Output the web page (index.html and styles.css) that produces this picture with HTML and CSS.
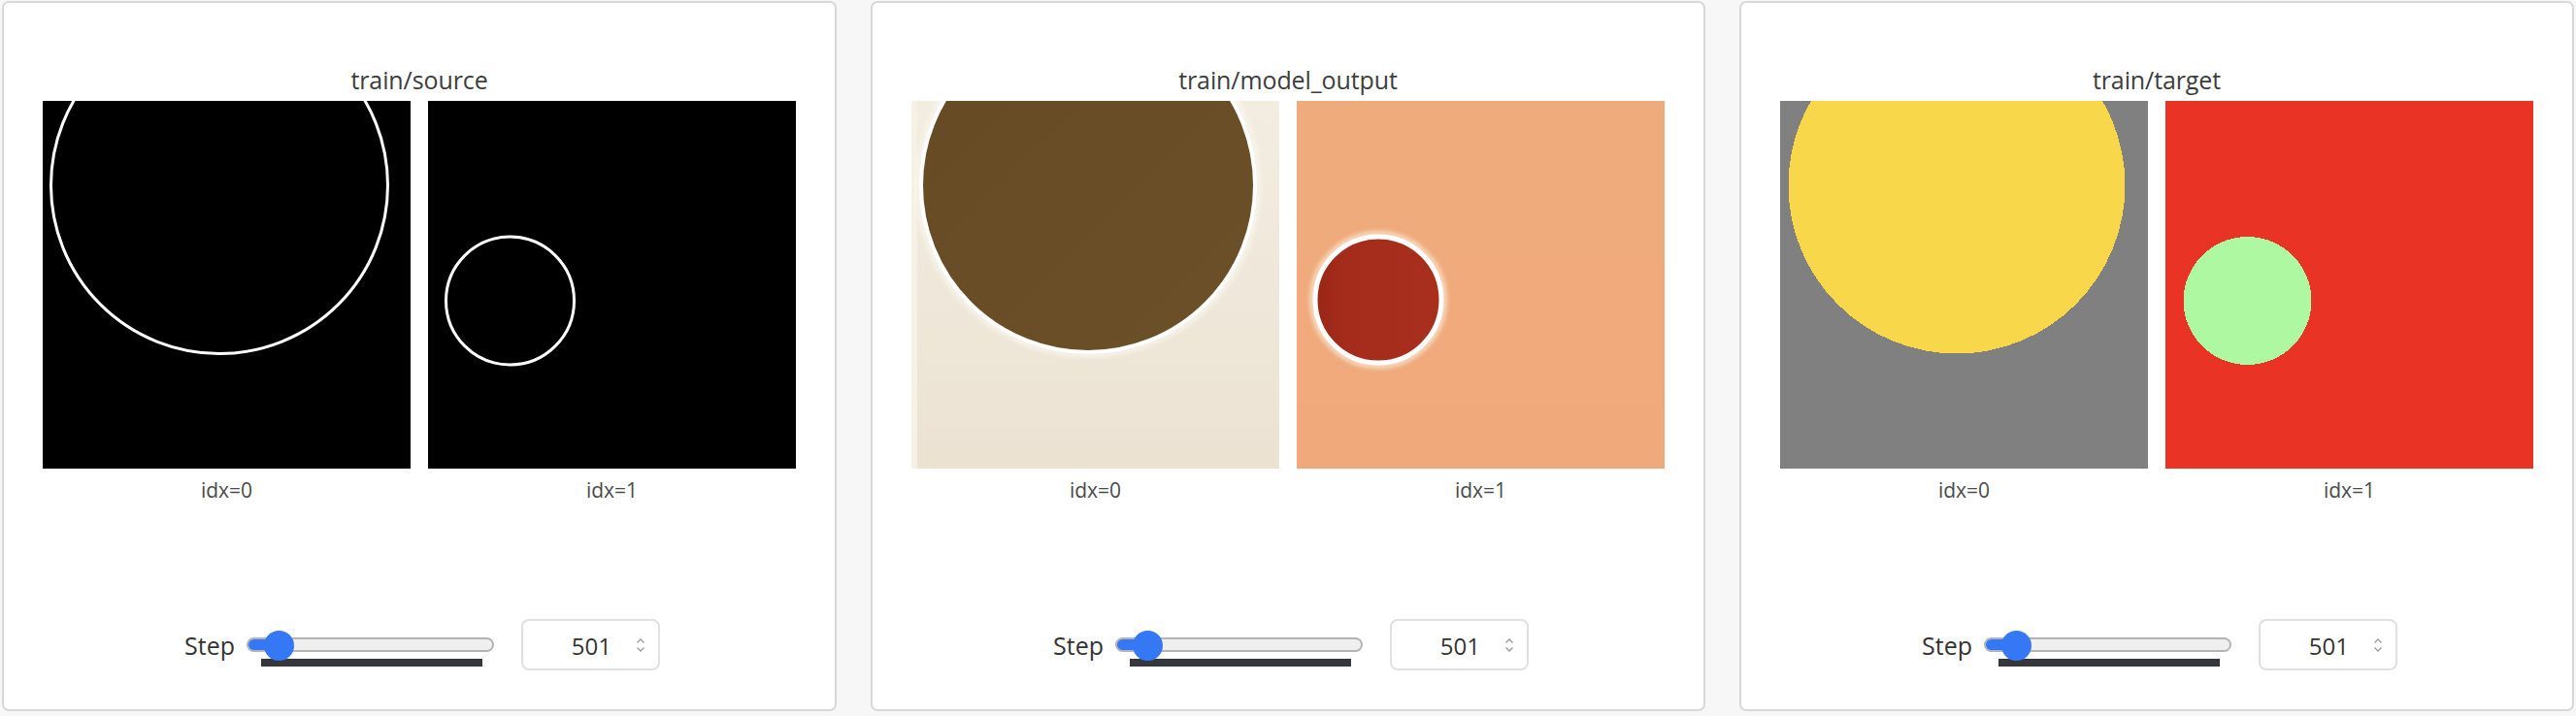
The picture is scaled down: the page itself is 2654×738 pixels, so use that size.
FILE: index.html
```html
<!DOCTYPE html>
<html lang="en">
<head>
<meta charset="utf-8">
<title>Media panels</title>
<link rel="stylesheet" href="styles.css">
</head>
<body>
<div class="panels">

  <section class="card">
    <h2 class="title">train/source</h2>
    <div class="media-row">
      <figure class="media">
        <svg class="canvas" viewBox="0 0 379 379" width="379" height="379">
          <rect width="379" height="379" fill="#000"/>
          <circle cx="182" cy="87" r="173.5" fill="none" stroke="#fff" stroke-width="3"/>
        </svg>
        <figcaption class="caption">idx=0</figcaption>
      </figure>
      <figure class="media">
        <svg class="canvas" viewBox="0 0 379 379" width="379" height="379">
          <rect width="379" height="379" fill="#000"/>
          <circle cx="84.5" cy="206" r="66" fill="none" stroke="#fff" stroke-width="3"/>
        </svg>
        <figcaption class="caption">idx=1</figcaption>
      </figure>
    </div>
    <div class="controls">
      <span class="step-label">Step</span>
      <div class="slider">
        <div class="track"><div class="fill"></div></div>
        <div class="thumb"></div>
        <div class="ticks"></div>
      </div>
      <div class="num-input">
        <span class="num-value">501</span>
        <svg class="spinner" viewBox="0 0 10 16" width="10" height="16">
          <path d="M1.5 5.5 L5 2 L8.5 5.5" fill="none" stroke="#9a9a9a" stroke-width="1.3"/>
          <path d="M1.5 10.5 L5 14 L8.5 10.5" fill="none" stroke="#9a9a9a" stroke-width="1.3"/>
        </svg>
      </div>
    </div>
  </section>

  <section class="card">
    <h2 class="title">train/model_output</h2>
    <div class="media-row">
      <figure class="media">
        <svg class="canvas" viewBox="0 0 379 379" width="379" height="379">
          <defs>
            <linearGradient id="cream" x1="0" y1="0" x2="0" y2="1">
              <stop offset="0" stop-color="#f3ede1"/>
              <stop offset="1" stop-color="#ebe2d2"/>
            </linearGradient>
            <linearGradient id="brown" x1="0" y1="0" x2="1" y2="1">
              <stop offset="0" stop-color="#654a24"/>
              <stop offset="1" stop-color="#6c5028"/>
            </linearGradient>
            <filter id="glow1" x="-20%" y="-20%" width="140%" height="140%">
              <feGaussianBlur stdDeviation="2"/>
            </filter>
          </defs>
          <rect width="379" height="379" fill="url(#cream)"/>
          <rect x="0" y="0" width="6" height="379" fill="#f6f1e7"/>
          <circle cx="182" cy="87" r="175" fill="none" stroke="#fbf8f1" stroke-opacity="0.7" stroke-width="6" filter="url(#glow1)"/>
          <circle cx="182" cy="87" r="172" fill="url(#brown)" stroke="#ffffff" stroke-width="4"/>
        </svg>
        <figcaption class="caption">idx=0</figcaption>
      </figure>
      <figure class="media">
        <svg class="canvas" viewBox="0 0 379 379" width="379" height="379">
          <defs>
            <linearGradient id="peach" x1="0" y1="0" x2="0" y2="1">
              <stop offset="0" stop-color="#f0ab7c"/>
              <stop offset="1" stop-color="#efa97b"/>
            </linearGradient>
            <linearGradient id="redc" x1="0" y1="0" x2="1" y2="0">
              <stop offset="0" stop-color="#9a2616"/>
              <stop offset="0.25" stop-color="#a52c1b"/>
              <stop offset="1" stop-color="#a82f1c"/>
            </linearGradient>
            <filter id="glow2" x="-30%" y="-30%" width="160%" height="160%">
              <feGaussianBlur stdDeviation="2"/>
            </filter>
          </defs>
          <rect width="379" height="379" fill="url(#peach)"/>
          <circle cx="84" cy="205" r="68" fill="none" stroke="#f9e6cf" stroke-opacity="0.8" stroke-width="6" filter="url(#glow2)"/>
          <circle cx="84" cy="205" r="65" fill="url(#redc)" stroke="#ffffff" stroke-width="5"/>
        </svg>
        <figcaption class="caption">idx=1</figcaption>
      </figure>
    </div>
    <div class="controls">
      <span class="step-label">Step</span>
      <div class="slider">
        <div class="track"><div class="fill"></div></div>
        <div class="thumb"></div>
        <div class="ticks"></div>
      </div>
      <div class="num-input">
        <span class="num-value">501</span>
        <svg class="spinner" viewBox="0 0 10 16" width="10" height="16">
          <path d="M1.5 5.5 L5 2 L8.5 5.5" fill="none" stroke="#9a9a9a" stroke-width="1.3"/>
          <path d="M1.5 10.5 L5 14 L8.5 10.5" fill="none" stroke="#9a9a9a" stroke-width="1.3"/>
        </svg>
      </div>
    </div>
  </section>

  <section class="card">
    <h2 class="title">train/target</h2>
    <div class="media-row">
      <figure class="media">
        <svg class="canvas crisp" viewBox="0 0 379 379" width="379" height="379">
          <rect width="379" height="379" fill="#808080"/>
          <circle cx="182" cy="87" r="173.5" fill="#f8d84a"/>
        </svg>
        <figcaption class="caption">idx=0</figcaption>
      </figure>
      <figure class="media">
        <svg class="canvas crisp" viewBox="0 0 379 379" width="379" height="379">
          <rect width="379" height="379" fill="#e93425"/>
          <circle cx="84.5" cy="206" r="66" fill="#aff8a2"/>
        </svg>
        <figcaption class="caption">idx=1</figcaption>
      </figure>
    </div>
    <div class="controls">
      <span class="step-label">Step</span>
      <div class="slider">
        <div class="track"><div class="fill"></div></div>
        <div class="thumb"></div>
        <div class="ticks"></div>
      </div>
      <div class="num-input">
        <span class="num-value">501</span>
        <svg class="spinner" viewBox="0 0 10 16" width="10" height="16">
          <path d="M1.5 5.5 L5 2 L8.5 5.5" fill="none" stroke="#9a9a9a" stroke-width="1.3"/>
          <path d="M1.5 10.5 L5 14 L8.5 10.5" fill="none" stroke="#9a9a9a" stroke-width="1.3"/>
        </svg>
      </div>
    </div>
  </section>

</div>
</body>
</html>
```

FILE: styles.css
```css
* { box-sizing: border-box; }

html, body {
  margin: 0;
  padding: 0;
  background: #f7f7f7;
  font-family: "Open Sans", "Liberation Sans", sans-serif;
  color: #3b3b3b;
}

.panels {
  display: flex;
  gap: 35px;
  padding: 1px 2px;
}

.card {
  width: 860px;
  height: 732px;
  background: #ffffff;
  border: 2px solid #d8d8d8;
  border-radius: 7px;
  display: flex;
  flex-direction: column;
  align-items: center;
  padding-top: 64px;
  padding-bottom: 40px;
}

.title {
  margin: 0;
  font-size: 25px;
  font-weight: 400;
  line-height: 30px;
  color: #3d3d3d;
  letter-spacing: -0.1px;
}

.media-row {
  display: flex;
  gap: 18px;
  margin-top: 7px;
}

.media {
  margin: 0;
  display: flex;
  flex-direction: column;
  align-items: center;
}

.canvas {
  display: block;
  width: 379px;
  height: 379px;
}

.crisp { shape-rendering: crispEdges; }

.caption {
  margin-top: 8px;
  font-size: 21px;
  line-height: 28px;
  color: #4a4a4a;
}

.controls {
  margin-top: auto;
  display: flex;
  align-items: center;
  height: 53px;
  margin-left: 6px;
}

.step-label {
  font-size: 25px;
  line-height: 30px;
  color: #333;
  margin-right: 12px;
}

.slider {
  position: relative;
  width: 255px;
  padding-top: 15px;
  display: flex;
  flex-direction: column;
}

.track {
  height: 15px;
  border: 2px solid #b3b3b3;
  border-radius: 8px;
  background: #efefef;
  overflow: hidden;
}

.fill {
  width: 34px;
  height: 100%;
  background: #3478f6;
}

.thumb {
  position: absolute;
  left: 18px;
  top: 8px;
  width: 31px;
  height: 31px;
  border-radius: 50%;
  background: #3478f6;
}

.ticks {
  margin: 7px 12px 0 15px;
  height: 8px;
  background: #34383c;
}

.num-input {
  margin-left: 28px;
  width: 143px;
  height: 53px;
  border: 2px solid #e0e0e0;
  border-radius: 8px;
  display: flex;
  align-items: center;
  justify-content: flex-end;
  gap: 25px;
  padding-right: 13px;
  background: #fff;
}

.num-value {
  font-size: 24px;
  line-height: 30px;
  color: #333;
  padding-top: 3px;
}

.spinner {
  display: block;
}
```
